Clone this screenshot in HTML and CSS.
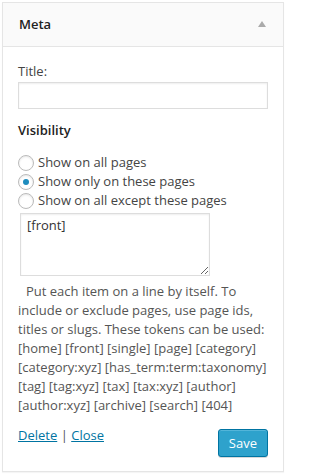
FILE: index.html
```html
<!DOCTYPE html>
<html>
<head>
<meta charset="utf-8">
<link rel="stylesheet" href="styles.css">
</head>
<body>
<div class="widget">
  <div class="widget-top">
    <h4 class="widget-title">Meta</h4>
    <span class="toggle-arrow"></span>
  </div>
  <div class="widget-inside">
    <label class="field-label" for="title">Title:</label>
    <input class="text-input" id="title" type="text">
    <h5 class="section-title">Visibility</h5>
    <div class="radio-list">
      <label class="radio-row"><input type="radio" name="vis" class="radio"> Show on all pages</label>
      <label class="radio-row"><input type="radio" name="vis" class="radio" checked> Show only on these pages</label>
      <label class="radio-row"><input type="radio" name="vis" class="radio"> Show on all except these pages</label>
    </div>
    <textarea class="pages-area">[front]</textarea>
    <p class="description">Put each item on a line by itself. To include or exclude pages, use page ids, titles or slugs. These tokens can be used: [home] [front] [single] [page] [category] [category:xyz] [has_term:term:taxonomy] [tag] [tag:xyz] [tax] [tax:xyz] [author] [author:xyz] [archive] [search] [404]</p>
    <div class="widget-footer">
      <div class="control-links"><a href="#">Delete</a> <span class="sep">|</span> <a href="#">Close</a></div>
      <button class="button-primary" type="button">Save</button>
    </div>
  </div>
</div>
</body>
</html>
```

FILE: styles.css
```css
html, body {
  margin: 0;
  padding: 0;
  background: #fff;
}
body {
  font-family: "Open Sans", "Liberation Sans", sans-serif;
  font-size: 13px;
  line-height: 19px;
  color: #444;
}
.widget {
  margin: 2px;
  width: 282px;
  box-sizing: border-box;
  border: 1px solid #e5e5e5;
  background: #fff;
  box-shadow: 0 1px 1px rgba(0,0,0,0.04);
}
.widget-top {
  height: 43px;
  background: #fafafa;
  border-bottom: 1px solid #e5e5e5;
  display: flex;
  align-items: center;
  justify-content: space-between;
  padding: 0 17px 0 16px;
}
.widget-title {
  margin: 0;
  font-size: 13px;
  font-weight: 600;
  line-height: 43px;
  color: #222;
}
.toggle-arrow {
  width: 0;
  height: 0;
  border-left: 4px solid transparent;
  border-right: 4px solid transparent;
  border-bottom: 6px solid #aaa;
  margin-top: -1px;
}
.widget-inside {
  padding: 15px 15px 14px;
  display: flex;
  flex-direction: column;
}
.field-label {
  display: block;
  line-height: 19px;
}
.text-input {
  display: block;
  margin: 1px 0 0;
  width: 250px;
  height: 27px;
  box-sizing: border-box;
  border: 1px solid #ddd;
  box-shadow: inset 0 1px 2px rgba(0,0,0,0.07);
  background: #fff;
  padding: 3px 5px;
  font: inherit;
}
.section-title {
  margin: 12px 0 0;
  font-size: 13px;
  font-weight: 600;
  line-height: 19px;
  color: #222;
}
.radio-list {
  margin-top: 13px;
  display: flex;
  flex-direction: column;
}
.radio-row {
  display: flex;
  align-items: center;
  height: 19px;
  gap: 4px;
}
.radio {
  -webkit-appearance: none;
  appearance: none;
  margin: 0;
  width: 16px;
  height: 16px;
  box-sizing: border-box;
  border: 1px solid #bbb;
  border-radius: 50%;
  background: #fff;
  box-shadow: inset 0 1px 2px rgba(0,0,0,0.1);
  display: flex;
  align-items: center;
  justify-content: center;
  flex: none;
}
.radio:checked::before {
  content: "";
  width: 6px;
  height: 6px;
  border-radius: 50%;
  background: #1e8cbe;
}
.pages-area {
  margin: 3px 0 0 2px;
  width: 190px;
  height: 63px;
  box-sizing: border-box;
  border: 1px solid #ddd;
  box-shadow: inset 0 1px 2px rgba(0,0,0,0.07);
  padding: 2px 6px;
  font: 13px/19px "Open Sans", "Liberation Sans", sans-serif;
  color: #333;
  resize: both;
}
.description {
  margin: 6px 0 0;
  width: 250px;
  text-indent: 8px;
  color: #555;
}
.widget-footer {
  margin-top: 11px;
  display: flex;
  justify-content: space-between;
  align-items: flex-start;
}
.control-links a {
  color: #0074a2;
  text-decoration: underline;
}
.sep {
  color: #555;
}
.button-primary {
  margin-top: 3px;
  height: 28px;
  box-sizing: border-box;
  padding: 0 10px 1px;
  background: #2ea2cc;
  border: 1px solid #0074a2;
  border-radius: 3px;
  box-shadow: inset 0 1px 0 rgba(120,200,230,0.5), 0 1px 0 rgba(0,0,0,0.15);
  color: #fff;
  font: 13px/26px "Open Sans", "Liberation Sans", sans-serif;
}
```
